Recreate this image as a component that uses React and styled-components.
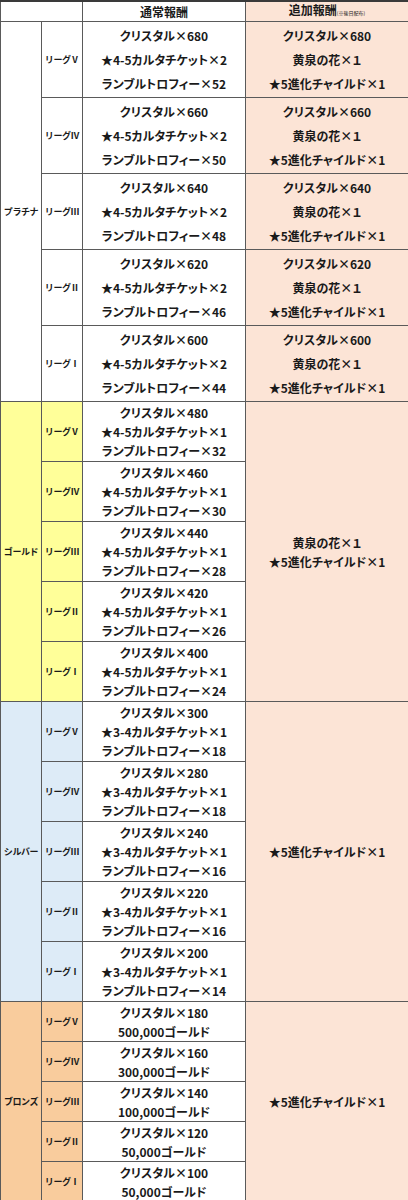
import React from "react";
import styled, { createGlobalStyle } from "styled-components";

const GlobalStyle = createGlobalStyle`
  html, body {
    margin: 0;
    padding: 0;
    background: #ffffff;
  }
  body {
    font-family: "Noto Sans CJK JP", "Noto Sans", sans-serif;
    color: #1a1a1a;
  }
`;

const tiers = [
  {
    name: "プラチナ",
    bg: "#ffffff",
    rowH: 76,
    lh: 24,
    shared: null,
    rows: [
      ["Ⅴ", ["クリスタル×680", "★4-5カルタチケット×2", "ランブルトロフィー×52"], ["クリスタル×680", "黄泉の花×１", "★5進化チャイルド×1"]],
      ["Ⅳ", ["クリスタル×660", "★4-5カルタチケット×2", "ランブルトロフィー×50"], ["クリスタル×660", "黄泉の花×１", "★5進化チャイルド×1"]],
      ["Ⅲ", ["クリスタル×640", "★4-5カルタチケット×2", "ランブルトロフィー×48"], ["クリスタル×640", "黄泉の花×１", "★5進化チャイルド×1"]],
      ["Ⅱ", ["クリスタル×620", "★4-5カルタチケット×2", "ランブルトロフィー×46"], ["クリスタル×620", "黄泉の花×１", "★5進化チャイルド×1"]],
      ["Ⅰ", ["クリスタル×600", "★4-5カルタチケット×2", "ランブルトロフィー×44"], ["クリスタル×600", "黄泉の花×１", "★5進化チャイルド×1"]],
    ],
  },
  {
    name: "ゴールド",
    bg: "#ffff99",
    rowH: 60,
    lh: 19,
    shared: ["黄泉の花×１", "★5進化チャイルド×1"],
    rows: [
      ["Ⅴ", ["クリスタル×480", "★4-5カルタチケット×1", "ランブルトロフィー×32"]],
      ["Ⅳ", ["クリスタル×460", "★4-5カルタチケット×1", "ランブルトロフィー×30"]],
      ["Ⅲ", ["クリスタル×440", "★4-5カルタチケット×1", "ランブルトロフィー×28"]],
      ["Ⅱ", ["クリスタル×420", "★4-5カルタチケット×1", "ランブルトロフィー×26"]],
      ["Ⅰ", ["クリスタル×400", "★4-5カルタチケット×1", "ランブルトロフィー×24"]],
    ],
  },
  {
    name: "シルバー",
    bg: "#ddebf7",
    rowH: 60,
    lh: 19,
    shared: ["★5進化チャイルド×1"],
    rows: [
      ["Ⅴ", ["クリスタル×300", "★3-4カルタチケット×1", "ランブルトロフィー×18"]],
      ["Ⅳ", ["クリスタル×280", "★3-4カルタチケット×1", "ランブルトロフィー×18"]],
      ["Ⅲ", ["クリスタル×240", "★3-4カルタチケット×1", "ランブルトロフィー×16"]],
      ["Ⅱ", ["クリスタル×220", "★3-4カルタチケット×1", "ランブルトロフィー×16"]],
      ["Ⅰ", ["クリスタル×200", "★3-4カルタチケット×1", "ランブルトロフィー×14"]],
    ],
  },
  {
    name: "ブロンズ",
    bg: "#f9cc9d",
    rowH: 40,
    lh: 19,
    shared: ["★5進化チャイルド×1"],
    rows: [
      ["Ⅴ", ["クリスタル×180", "500,000ゴールド"]],
      ["Ⅳ", ["クリスタル×160", "300,000ゴールド"]],
      ["Ⅲ", ["クリスタル×140", "100,000ゴールド"]],
      ["Ⅱ", ["クリスタル×120", "50,000ゴールド"]],
      ["Ⅰ", ["クリスタル×100", "50,000ゴールド"]],
    ],
  },
];

const App = () => {
  return (
    <>
      <GlobalStyle />
      <Table>
        <colgroup>
          <col style={{ width: 41 }} />
          <col style={{ width: 41 }} />
          <col style={{ width: 163 }} />
          <col style={{ width: 163 }} />
        </colgroup>
        <thead>
          <tr>
            <HeadCell colSpan={2} />
            <HeadCell>通常報酬</HeadCell>
            <HeadCell $bonus>
              追加報酬<Note>(※後日配布)</Note>
            </HeadCell>
          </tr>
        </thead>
        <tbody>
          {tiers.map((tier) =>
            tier.rows.map(([num, normal, bonus], i) => (
              <Row key={tier.name + num} $h={tier.rowH}>
                {i === 0 && (
                  <TierCell rowSpan={5} $bg={tier.bg}>
                    {tier.name}
                  </TierCell>
                )}
                <LeagueCell $bg={tier.bg}>リーグ{num}</LeagueCell>
                <RewardCell $lh={tier.lh}>
                  {normal.map((t) => (
                    <Line key={t}>{t}</Line>
                  ))}
                </RewardCell>
                {bonus && (
                  <BonusCell $lh={tier.lh}>
                    {bonus.map((t) => (
                      <Line key={t}>{t}</Line>
                    ))}
                  </BonusCell>
                )}
                {!bonus && i === 0 && (
                  <BonusCell rowSpan={5} $lh={tier.lh}>
                    {tier.shared.map((t) => (
                      <Line key={t}>{t}</Line>
                    ))}
                  </BonusCell>
                )}
              </Row>
            ))
          )}
        </tbody>
      </Table>
    </>
  );
};

const Table = styled.table`
  width: 408px;
  table-layout: fixed;
  border-collapse: collapse;
  border-top: 2px solid #3a3a3a;
  border-left: 1px solid #555;
  border-right: 1px solid #555;
  border-bottom: 1px solid #555;
`;

const Cell = styled.td`
  border: 1px solid #5a5a5a;
  padding: 0;
  text-align: center;
  vertical-align: middle;
  font-weight: 700;
  box-sizing: border-box;
`;

const HeadCell = styled(Cell).attrs({ as: "th" })`
  height: 19px;
  font-size: 12px;
  line-height: 16px;
  background: ${(p) => (p.$bonus ? "#fce4d6" : "#ffffff")};
`;

const Note = styled.span`
  font-size: 5px;
  font-weight: 400;
  vertical-align: baseline;
`;

const Row = styled.tr`
  height: ${(p) => p.$h}px;
`;

const TierCell = styled(Cell)`
  background: ${(p) => p.$bg};
  font-size: 9px;
  letter-spacing: -0.4px;
`;

const LeagueCell = styled(Cell)`
  background: ${(p) => p.$bg};
  font-size: 9px;
  letter-spacing: -0.4px;
`;

const RewardCell = styled(Cell)`
  background: #ffffff;
  font-size: 12px;
  line-height: ${(p) => p.$lh}px;
  font-feature-settings: "palt";
`;

const BonusCell = styled(Cell)`
  background: #fce4d6;
  font-size: 12px;
  line-height: ${(p) => p.$lh}px;
  font-feature-settings: "palt";
`;

const Line = styled.div`
  white-space: nowrap;
`;

export default App;
